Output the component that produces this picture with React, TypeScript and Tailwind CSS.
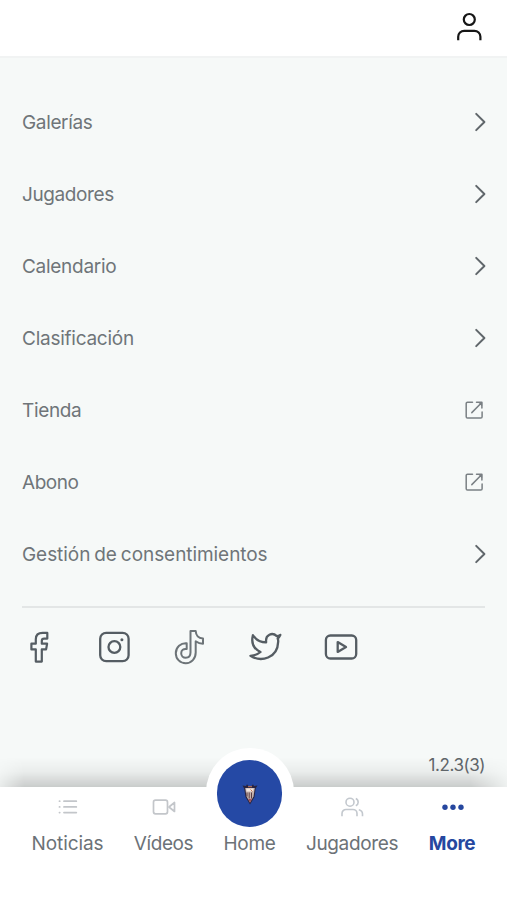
import type { ReactNode } from 'react';

type Row = { label: string; external?: boolean; spacing: string };

const rows: Row[] = [
  { label: 'Galerías', spacing: 'tracking-[-0.35px]' },
  { label: 'Jugadores', spacing: 'tracking-[-0.4px]' },
  { label: 'Calendario', spacing: 'tracking-[-0.28px]' },
  { label: 'Clasificación', spacing: 'tracking-[-0.25px]' },
  { label: 'Tienda', external: true, spacing: 'tracking-[-0.35px]' },
  { label: 'Abono', external: true, spacing: 'tracking-[-0.45px]' },
  { label: 'Gestión de consentimientos', spacing: 'tracking-[-0.06px] [word-spacing:-1.3px]' },
];

function UserIcon() {
  return (
    <svg className="h-[30px] w-[28px]" viewBox="0 0 28 30" fill="none" stroke="#161616" strokeWidth="2.2">
      <circle cx="14.3" cy="7.5" r="5.5" />
      <path d="M3.2 28.200v-3.400a6 6 0 0 1 6-6h10.200a6 6 0 0 1 6 6v3.400" />
    </svg>
  );
}

function ChevronIcon() {
  return (
    <svg className="-mr-[1px] h-5 w-3" viewBox="0 0 12 20" fill="none" stroke="#60676b" strokeWidth="2" strokeLinecap="round" strokeLinejoin="round">
      <path d="M2.200 1.900 10.400 10l-8.200 8.100" />
    </svg>
  );
}

function ExternalIcon() {
  return (
    <svg className="mr-[2px] h-5 w-[19px]" viewBox="0 0 19 20" fill="none" stroke="#7a8084" strokeWidth="1.5" strokeLinecap="round" strokeLinejoin="round">
      <path d="M8.500 2.200H3.500A1.300 1.300 0 0 0 2.200 3.500v13.300a1.300 1.300 0 0 0 1.300 1.300h13.300a1.300 1.300 0 0 0 1.300-1.300V12M7.800 12.600 17.300 3M12.500 2.200h5.400V8" />
      <path d="M14.800 2.500h3v3z" fill="#7a8084" strokeWidth=".6" />
    </svg>
  );
}

function SocialRow() {
  return (
    <div className="mt-[20px] flex h-[38px] items-center gap-[37.500px] text-[#555d63]">
      <svg className="h-[38px] w-[38px]" viewBox="0 0 38 38" fill="none" stroke="currentColor" strokeWidth="2.200" strokeLinejoin="round">
        <path d="M27.300 4.900h-4.600c-4.600 0-6.900 2.500-6.900 6.300v4.500h-4.400v5.700h4.400v12.200h6V21.400h4.300l1-5.700h-5.300v-2.800c0-1.600.8-2.300 2.300-2.300h3.200z" />
      </svg>
      <svg className="h-[38px] w-[38px]" viewBox="0 0 38 38" fill="none" stroke="currentColor" strokeWidth="2.300">
        <rect x="4.200" y="4.800" width="28.400" height="28.400" rx="6" />
        <circle cx="18.400" cy="19" r="5.900" />
        <circle cx="25.900" cy="11.700" r="1.500" fill="currentColor" stroke="none" />
      </svg>
      <svg className="h-[38px] w-[38px]" viewBox="0 0 38 38" fill="none" stroke="#6d7478" strokeWidth="2" strokeLinejoin="round">
        <path d="M19.500 3h5.200c.2 4.200 3 7.100 7.300 7.500v5.300c-3 0-5.200-.9-7.300-2.500v11.200c0 6.200-4.200 10.700-9.900 10.700-5.600 0-10-4.300-10-10 0-6 5-10.400 10.900-9.900v5.700c-3.200-.6-5.500 1.300-5.500 4.200 0 2.600 1.900 4.500 4.500 4.500 3 0 4.800-2 4.800-5.200z" />
      </svg>
      <svg className="h-[38px] w-[38px]" viewBox="0 0 38 38" fill="none" stroke="currentColor" strokeWidth="2.300" strokeLinejoin="round" strokeLinecap="round">
        <path d="M33.300 6.900c-1 .7-2.200 1.100-3.500 1.200-4.700-4.400-11.400-1-10.700 5.200v1.100c-5.600.1-10-2.600-13.200-7.200-1.900 7.700.1 13.300 7.600 16.800-2.900 2.500-6 3.700-10.100 3.800 10.700 6.600 27.200 2.600 27.800-14.200.1-1.100-.1-2.100-.5-3.100 1.300-1.100 2-2.300 2.600-3.600z" />
      </svg>
      <svg className="h-[38px] w-[38px]" viewBox="0 0 38 38" fill="none" stroke="currentColor" strokeWidth="2.300" strokeLinejoin="round">
        <rect x="3.900" y="7.500" width="30.300" height="23" rx="4.500" />
        <path d="M15.700 14.100v9.800l8.300-4.900z" />
      </svg>
    </div>
  );
}

function NavItem({ label, width, active, spacing, children }: { label: string; width: string; active?: boolean; spacing: string; children?: ReactNode }) {
  return (
    <div className={'flex flex-col items-center ' + width}>
      <div className="flex h-[39px] items-center">{children}</div>
      <span className={'mt-[5px] whitespace-nowrap text-[19px] leading-[26px] ' + spacing + (active ? ' font-bold text-[#26479f]' : ' text-[#6c7277]')}>{label}</span>
    </div>
  );
}

function Crest() {
  return (
    <svg className="relative h-[24px] w-[18px]" viewBox="0 0 18 24">
      <path d="M1.500 3.500 5 4l1-1.800L7.500 4h3L12 2.200 13 4l3.500-.5-1.800 3L13.500 15 9 22.500 4.500 15 3.200 6.500z" fill="#292440" />
      <path d="M4.200 6h9.600l-1.300 8.500L9 20.500l-3.500-6z" fill="#c7b4ae" />
      <path d="M5.200 6.500h7.400l-.4 3H5.600z" fill="#f2e6df" />
      <path d="M6 10.500v4M8.200 10.500v6M10.500 10.500v6" stroke="#4e3038" strokeWidth=".9" />
      <path d="M7 4.700h4M9.500 7.500l2 2" stroke="#c77859" strokeWidth="1" />
      <path d="m7.300 17 1.700 3.800 1.800-4" fill="#a34e55" />
    </svg>
  );
}

export default function App() {
  return (
    <div className="flex h-[900px] w-[507px] flex-col overflow-hidden bg-[#f6f9f8] font-['Inter','Liberation_Sans',sans-serif]">
      <header className="flex h-[58px] shrink-0 items-start justify-end border-b-2 border-[#f1f3f3] bg-white pr-[24px] pt-[12px]">
        <UserIcon />
      </header>
      <main className="flex h-[729px] shrink-0 flex-col px-[22px] pt-[28px]">
        {rows.map((row) => (
          <div key={row.label} className="flex h-[72px] shrink-0 items-center justify-between">
            <span className={'whitespace-nowrap pt-[2px] text-[19px] text-[#6f7579] ' + row.spacing}>{row.label}</span>
            {row.external ? <ExternalIcon /> : <ChevronIcon />}
          </div>
        ))}
        <div className="mt-[16px] h-[2px] shrink-0 bg-[#e3e6e6]" />
        <div className="-ml-[2px]">
          <SocialRow />
        </div>
        <div className="relative z-10 mt-[87px] text-right text-[17px] leading-6 tracking-[-0.45px] text-[#5f6569]">1.2.3(3)</div>
      </main>
      <nav className="relative h-[113px] shrink-0 bg-white">
        <div className="absolute inset-x-0 -top-[30px] h-[30px] bg-linear-to-t from-black/18 via-black/5 via-50% to-transparent mask-[linear-gradient(to_right,rgba(0,0,0,0.3),black_24px,black_470px,rgba(0,0,0,0.2))]" />
        <div className="absolute left-[206px] -top-[39px] h-[90px] w-[88px] rounded-full bg-white" />
        <div className="absolute left-[217px] -top-[27px] flex h-[67px] w-[65px] items-center justify-center rounded-full bg-[#2549a5]">
          <Crest />
        </div>
        <div className="relative flex gap-[31px] pl-[32px]">
          <NavItem label="Noticias" width="w-[71px]" spacing="tracking-[-0.08px]">
            <svg className="h-[16px] w-[20px]" viewBox="0 0 20 16" stroke="#c3c6ca" strokeWidth="1.800" strokeLinecap="round">
              <path d="M6 2.200h12.300M6 7.900h12.300M6 13.600h12.300M1.500 2.200h.2M1.500 7.900h.2M1.500 13.600h.2" />
            </svg>
          </NavItem>
          <NavItem label="Vídeos" width="w-[59px]" spacing="tracking-[-0.4px]">
            <svg className="h-[16px] w-[24px]" viewBox="0 0 24 16" fill="none" stroke="#c3c6ca" strokeWidth="1.700" strokeLinejoin="round">
              <rect x="1.500" y="1.200" width="14" height="13.600" rx="2" />
              <path d="m17 8 5.500-4.500v9z" />
            </svg>
          </NavItem>
          <NavItem label="Home" width="w-[51px]" spacing="tracking-[-0.35px]" />
          <NavItem label="Jugadores" width="w-[92px]" spacing="tracking-[-0.35px]">
            <svg className="h-[20px] w-[24px]" viewBox="0 0 24 20" fill="none" stroke="#c3c8ce" strokeWidth="1.600">
              <circle cx="10" cy="5.200" r="4" />
              <path d="M2 19.200v-2.700a4 4 0 0 1 4-4h7a4 4 0 0 1 4 4v2.700M15.800 1.500a4 4 0 0 1 0 7.300M18.800 12.800c2.400.6 3.700 2 3.700 4.100v2.300" />
            </svg>
          </NavItem>
          <NavItem label="More" width="w-[46px]" spacing="tracking-[-0.4px]" active>
            <svg className="ml-[2px] h-[8px] w-[22px]" viewBox="0 0 22 8" fill="#26479f">
              <circle cx="3" cy="4.200" r="2.700" />
              <circle cx="11" cy="4.200" r="2.700" />
              <circle cx="19" cy="4.200" r="2.700" />
            </svg>
          </NavItem>
        </div>
      </nav>
    </div>
  );
}
